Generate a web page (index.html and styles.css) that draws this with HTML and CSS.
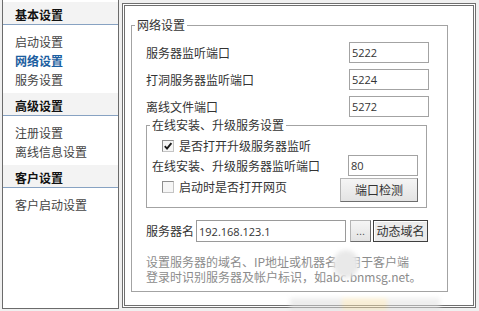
FILE: index.html
```html
<!DOCTYPE html>
<html lang="zh-CN">
<head>
    <meta charset="UTF-8">
    <title>网络设置</title>
    <link rel="stylesheet" href="styles.css">
</head>
<body>
    <div class="window">
        <!-- 左侧设置分类 -->
        <aside class="sidebar">
            <div class="group">
                <div class="group-title">基本设置</div>
                <ul class="group-items">
                    <li>启动设置</li>
                    <li class="active">网络设置</li>
                    <li>服务设置</li>
                </ul>
            </div>
            <div class="group">
                <div class="group-title">高级设置</div>
                <ul class="group-items">
                    <li>注册设置</li>
                    <li>离线信息设置</li>
                </ul>
            </div>
            <div class="group">
                <div class="group-title">客户设置</div>
                <ul class="group-items">
                    <li>客户启动设置</li>
                </ul>
            </div>
        </aside>

        <!-- 设置内容 -->
        <main class="panel">
            <fieldset class="box">
                <legend>网络设置</legend>
                <div class="row first">
                    <span>服务器监听端口</span>
                    <input class="field port" value="5222">
                </div>
                <div class="row">
                    <span>打洞服务器监听端口</span>
                    <input class="field port" value="5224">
                </div>
                <div class="row">
                    <span>离线文件端口</span>
                    <input class="field port" value="5272">
                </div>

                <fieldset class="box sub">
                    <legend>在线安装、升级服务设置</legend>
                    <label class="check-row lead">
                        <span class="check">
                            <svg viewBox="0 0 10 10" width="10" height="10"><path d="M1.8 5.2 L4 7.6 L8.4 2.2" fill="none" stroke="#1a1a1a" stroke-width="1.9"/></svg>
                        </span>
                        是否打开升级服务器监听
                    </label>
                    <div class="row sub-row">
                        <span>在线安装、升级服务器监听端口</span>
                        <input class="field port-sm" value="80">
                    </div>
                    <div class="row sub-row tall">
                        <label class="check-row">
                            <span class="check"></span>
                            启动时是否打开网页
                        </label>
                        <button class="btn detect">端口检测</button>
                    </div>
                </fieldset>

                <div class="row server">
                    <span>服务器名</span>
                    <input class="field host" value="192.168.123.1">
                    <button class="btn dots">...</button>
                    <button class="btn ddns">动态域名</button>
                </div>
                <p class="desc">
                    设置服务器的域名、IP地址或机器名，用于客户端<br>
                    登录时识别服务器及帐户标识，如abc.bnmsg.net。
                    <span class="blot"></span>
                </p>
            </fieldset>
        </main>
    </div>
    <div class="smudge"></div>
</body>
</html>
```

FILE: styles.css
```css
/* 基础样式 */
* {
    margin: 0;
    padding: 0;
    box-sizing: border-box;
}

body {
    width: 479px;
    height: 311px;
    overflow: hidden;
    position: relative;
    background: #f0f0f0;
    color: #333;
    font: 12px/14px "Noto Sans CJK SC", sans-serif;
}

.window {
    display: flex;
    height: 311px;
    padding-left: 2px;
}

/* 左侧分类 */
.sidebar {
    width: 117px;
    height: 309px;
    background: #fff;
    border: 1px solid #6b6b6b;
    border-top: none;
    padding-top: 2px;
}

.group-title {
    background: #f3f3f3;
    padding: 6px 0 2px 12px;
    line-height: 14px;
    font-weight: bold;
    color: #111;
    border-bottom: 1px solid #87a2c2;
}

.group-items {
    list-style: none;
    padding: 7px 0 4px 12px;
    color: #444;
}

.group-items li {
    line-height: 19px;
}

.group-items li.active {
    color: #1c5ea0;
    font-weight: bold;
}

/* 右侧面板 */
.panel {
    width: 354px;
    height: 305px;
    margin: 3px 0 0 3px;
    background: #fff;
    border: 3px double #6f6f6f;
}

.box {
    border: 1px solid #a3a3a3;
}

.box > legend {
    padding: 0 2px;
    line-height: 14px;
    color: #333;
}

.panel > .box {
    width: 317px;
    margin: 12px 0 0 6px;
    padding: 0 18px 7px 14px;
}

.panel > .box > legend {
    margin-left: -11px;
}

.row {
    display: flex;
    align-items: center;
    justify-content: space-between;
    height: 21px;
}

.row + .row {
    margin-top: 6px;
}

.row.first {
    margin-top: 10px;
}

.field {
    height: 21px;
    padding: 0 2px;
    border: 1px solid #a3a3a3;
    background: #fff;
    color: #333;
    font: 11px "Open Sans", sans-serif;
    outline: none;
}

.port { width: 80px; }
.port-sm { width: 70px; }
.host {
    width: 150px;
    height: 22px;
    margin-left: 2px;
    border-color: #9a9a9a;
}

/* 在线安装分组 */
.sub {
    width: 281px;
    margin-top: 1px;
    padding: 0 8px 5px 5px;
}

.sub > legend {
    margin-left: -2px;
}

.check-row {
    display: flex;
    align-items: center;
    gap: 5px;
    height: 14px;
    margin-left: 10px;
}

.check-row.lead {
    margin-top: 7px;
}

.check {
    display: flex;
    align-items: center;
    justify-content: center;
    width: 12px;
    height: 12px;
    border: 1px solid #8f8f8f;
    border-right-color: #c4c4c4;
    border-bottom-color: #c4c4c4;
    background: #f6f6f6;
}

.row.sub-row {
    margin-top: 2px;
}

.row.tall {
    height: 24px;
    align-items: flex-start;
}

.row.tall .check-row {
    margin-top: 2px;
}

.btn {
    height: 24px;
    font: 12px/14px "Noto Sans CJK SC", sans-serif;
    color: #333;
    background: linear-gradient(#f5f5f5, #e3e3e3);
    border: 1px solid #b4b4b4;
    border-right-color: #6d6d6d;
    border-bottom-color: #6d6d6d;
}

.detect { width: 78px; }

.row.server {
    justify-content: flex-start;
    height: 22px;
    margin-top: 12px;
}

.dots {
    width: 21px;
    height: 22px;
    margin-left: 4px;
    font: 11px "Liberation Sans", sans-serif;
    color: #555;
}

.ddns {
    width: 55px;
    height: 22px;
    margin-left: 2px;
    border: 1px solid #3f3f3f;
    background: #ebebeb;
    box-shadow: inset 1px 1px #fff;
}

.desc {
    position: relative;
    margin-top: 12px;
    line-height: 15px;
    color: #8c8c8c;
}

/* 截图上的水印模糊 */
.blot {
    position: absolute;
    left: 187px;
    top: -4px;
    width: 26px;
    height: 28px;
    border-radius: 50%;
    background: #e9e9e9;
    filter: blur(2px);
}

.smudge {
    position: absolute;
    left: 290px;
    top: 298px;
    width: 150px;
    height: 13px;
    background: linear-gradient(to right, #dcdcdc 0 35%, #f3dfae 35% 65%, #e0e0e0 65%);
    filter: blur(2px);
    opacity: 0.5;
}
```
